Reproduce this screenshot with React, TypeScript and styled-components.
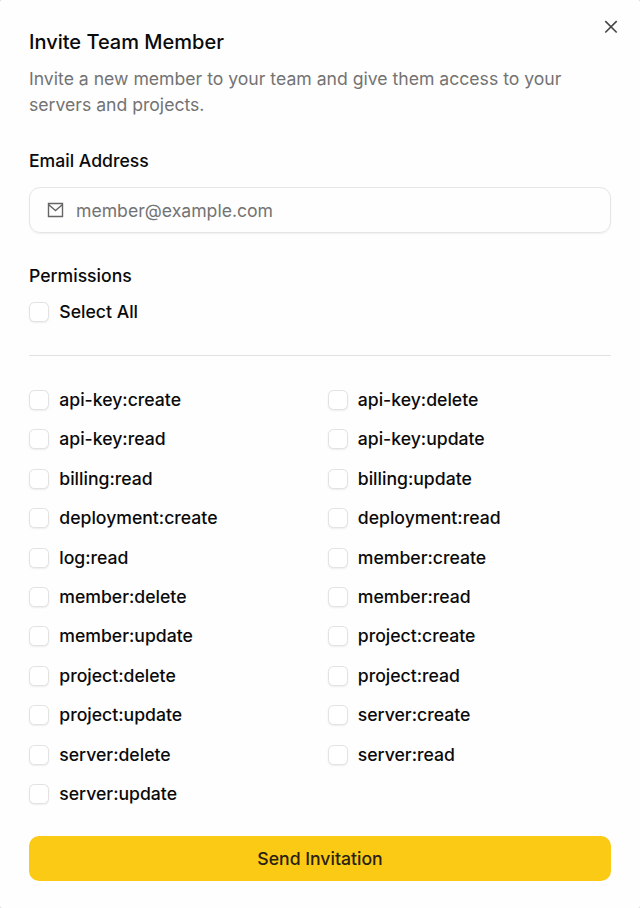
import React from 'react';
import styled, { createGlobalStyle } from 'styled-components';

const GlobalStyle = createGlobalStyle`
  *, *::before, *::after { box-sizing: border-box; }
  body { margin: 0; background: #d4d4d4; color: #0a0a0a; font-family: Inter, "Liberation Sans", sans-serif; }
`;

const Dialog = styled.main`
  position: relative;
  width: 640px;
  height: 908px;
  padding: 29px 29px 0;
  display: flex;
  flex-direction: column;
  border-radius: 2px;
  background: #fefefe;
  font-size: 17.63px;
  font-weight: 500;
`;

const CloseButton = styled.button`
  position: absolute;
  top: 16px;
  right: 18px;
  width: 22px;
  height: 22px;
  padding: 0;
  border: 0;
  background: none;
  color: #444;
  display: flex;
`;

const Title = styled.h1`
  margin: 0;
  font-size: 20px;
  font-weight: 500;
  line-height: 26px;
`;

const Description = styled.p`
  margin: 11px 0 0;
  color: #737373;
  font-weight: 400;
  line-height: 26px;
`;

const FieldLabel = styled.label`
  display: block;
  margin-top: 31px;
  line-height: 23px;
`;

const PermissionsLabel = styled.div`
  margin-top: 31px;
  line-height: 23px;
`;

const InputFrame = styled.div`
  display: flex;
  flex: none;
  align-items: center;
  gap: 12px;
  height: 46px;
  margin-top: 15px;
  padding: 0 17px;
  border: 1.5px solid #e5e5e5;
  border-radius: 11px;
  box-shadow: 0 1px 2px rgba(0, 0, 0, 0.06);
  color: #666;
`;

const EmailInput = styled.input`
  flex: 1;
  border: 0;
  outline: 0;
  padding: 0;
  background: none;
  font: inherit;
  font-weight: 400;
  &::placeholder { color: #737373; opacity: 1; }
`;

const Option = styled.label<{ $top?: number }>`
  display: flex;
  flex: none;
  align-items: center;
  gap: 10.3px;
  height: 22px;
  margin-top: ${({ $top = 0 }) => $top}px;
  line-height: 22px;
`;

const Checkbox = styled.input`
  appearance: none;
  flex: none;
  width: 20px;
  height: 20px;
  margin: 0;
  border: 1px solid #e2e2e2;
  border-radius: 5.5px;
  background: #fff;
  box-shadow: 0 1px 2px rgba(0, 0, 0, 0.07);
`;

const Divider = styled.hr`
  flex: none;
  width: 100%;
  height: 1px;
  margin: 32px 0 33px;
  border: 0;
  background: #e2e2e2;
`;

const PermissionGrid = styled.div`
  display: grid;
  flex: none;
  grid-template-columns: 1fr 1fr;
  column-gap: 15px;
  row-gap: 17.4px;
`;

const Submit = styled.button`
  flex: none;
  height: 45px;
  margin-top: 31.5px;
  border: 0;
  border-radius: 10px;
  background: #faca15;
  color: #2b2111;
  font: inherit;
`;

const permissions = [
  'api-key:create', 'api-key:delete', 'api-key:read', 'api-key:update',
  'billing:read', 'billing:update', 'deployment:create', 'deployment:read',
  'log:read', 'member:create', 'member:delete', 'member:read',
  'member:update', 'project:create', 'project:delete', 'project:read',
  'project:update', 'server:create', 'server:delete', 'server:read', 'server:update',
];

export default function App() {
  return (
    <>
      <GlobalStyle />
      <Dialog>
        <CloseButton aria-label="Close">
          <svg width="22" height="22" viewBox="0 0 22 22" fill="none" stroke="currentColor" strokeWidth="1.6">
            <path d="M5.3 5.1 16.7 16.5M16.7 5.1 5.3 16.5" />
          </svg>
        </CloseButton>
        <Title>Invite Team Member</Title>
        <Description>Invite a new member to your team and give them access to your servers and projects.</Description>
        <FieldLabel htmlFor="email">Email Address</FieldLabel>
        <InputFrame>
          <svg width="17" height="16" viewBox="0 0 17 16" fill="none" stroke="currentColor" strokeWidth="1.4">
            <path d="M1.5 1.5h14v13h-14zM1.5 2.5l7 6 7-6" />
          </svg>
          <EmailInput id="email" type="email" placeholder="member@example.com" />
        </InputFrame>
        <PermissionsLabel>Permissions</PermissionsLabel>
        <Option $top={14}><Checkbox type="checkbox" />Select All</Option>
        <Divider />
        <PermissionGrid>
          {permissions.map((name) => (
            <Option key={name}><Checkbox type="checkbox" />{name}</Option>
          ))}
        </PermissionGrid>
        <Submit type="button">Send Invitation</Submit>
      </Dialog>
    </>
  );
}
